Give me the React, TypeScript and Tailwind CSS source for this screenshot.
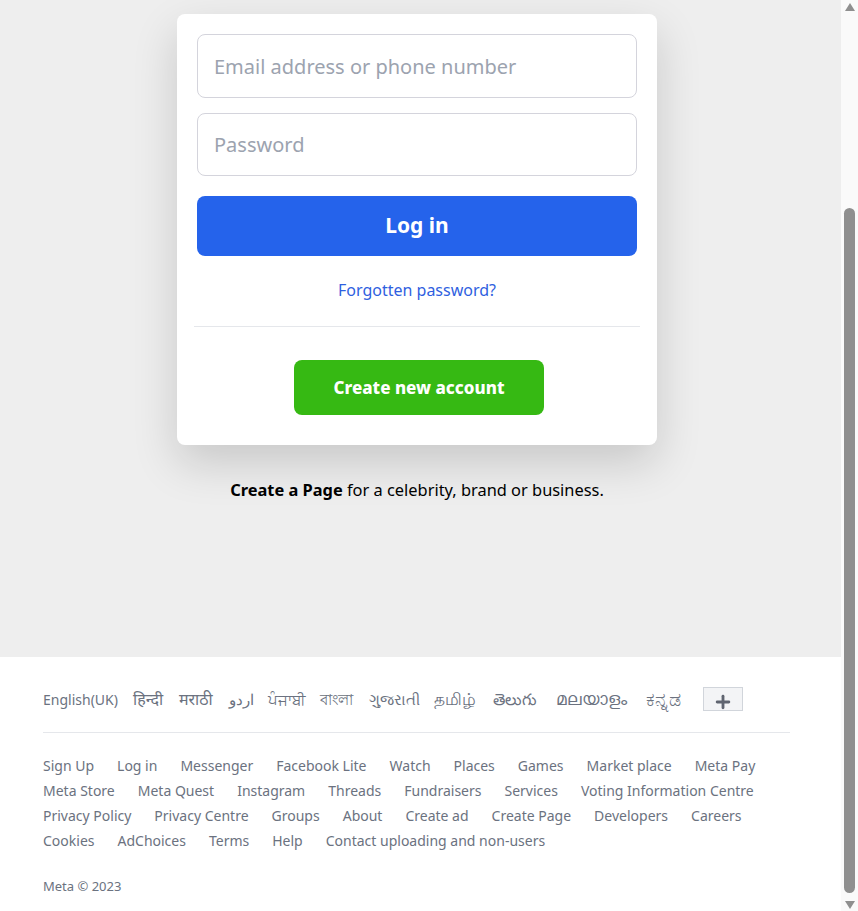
import { Plus } from 'lucide-react'

const languages = [
  { label: 'English(UK)', w: 'w-[75px]' },
  { label: 'हिन्दी', w: 'w-[31px] text-[16px]' },
  { label: 'मराठी', w: 'w-[35px] text-[16px]' },
  { label: 'اردو', w: 'w-[24px] text-[15px]' },
  { label: 'ਪੰਜਾਬੀ', w: 'w-[37px] text-[15px]' },
  { label: 'বাংলা', w: 'w-[34px] text-[15px]' },
  { label: 'ગુજરાતી', w: 'w-[50px] text-[15px]' },
  { label: 'தமிழ்', w: 'w-[44px] text-[17px]' },
  { label: 'తెలుగు', w: 'w-[48px] text-[16px]' },
  { label: 'മലയാളം', w: 'w-[75px] text-[17px]' },
  { label: 'ಕನ್ನಡ', w: 'w-[42px] text-[19px]' },
]

const links = [
  'Sign Up', 'Log in', 'Messenger', 'Facebook Lite', 'Watch', 'Places', 'Games', 'Market place', 'Meta Pay',
  'Meta Store', 'Meta Quest', 'Instagram', 'Threads', 'Fundraisers', 'Services', 'Voting Information Centre',
  'Privacy Policy', 'Privacy Centre', 'Groups', 'About', 'Create ad', 'Create Page', 'Developers', 'Careers',
  'Cookies', 'AdChoices', 'Terms', 'Help', 'Contact uploading and non-users',
]

function LoginCard() {
  return (
    <div className="w-[480px] bg-white rounded-lg shadow-[0_18px_45px_rgba(0,0,0,0.16)] px-5 pt-5 pb-[30px] flex flex-col items-center">
      <input
        type="text"
        placeholder="Email address or phone number"
        className="w-full h-[64px] rounded-lg border border-[#d4d4dc] px-4 text-[20px] text-gray-800 placeholder:text-[#9ca3af] outline-none"
      />
      <input
        type="password"
        placeholder="Password"
        className="mt-[15px] w-full h-[63px] rounded-lg border border-[#d4d4dc] px-4 text-[20px] text-gray-800 placeholder:text-[#9ca3af] outline-none"
      />
      <button className="mt-5 w-full h-[60px] rounded-lg bg-[#2563eb] text-white text-[21px] font-bold">
        Log in
      </button>
      <a href="#" className="mt-[22px] text-[16px] text-[#2f5fe0]">
        Forgotten password?
      </a>
      <div className="mt-[24px] w-[446px] border-t border-[#e5e7eb]" />
      <button className="mt-[33px] ml-[4px] w-[250px] h-[55px] rounded-lg bg-[#36b913] text-white text-[17px] font-extrabold">
        Create new account
      </button>
    </div>
  )
}

function Scrollbar() {
  return (
    <div className="w-[17px] shrink-0 bg-[#fafafa] flex flex-col items-center">
      <svg width="10" height="8" viewBox="0 0 10 8" className="mt-[3px]">
        <polygon points="5,0 10,8 0,8" fill="#8f8f8f" />
      </svg>
      <div className="mt-[197px] w-[11px] flex-1 rounded-full bg-[#8f8f8f]" />
      <svg width="10" height="8" viewBox="0 0 10 8" className="mt-[8px] mb-[2px]">
        <polygon points="0,0 10,0 5,8" fill="#8f8f8f" />
      </svg>
    </div>
  )
}

export default function App() {
  return (
    <div className="flex h-[911px] w-full overflow-hidden" style={{ fontFamily: '"Noto Sans", "Open Sans", sans-serif' }}>
      <div className="flex-1 flex flex-col">
        <div className="h-[657px] shrink-0 bg-[#eeeeee] flex flex-col items-center pt-[14px] pr-[7px]">
          <LoginCard />
          <p className="mt-[33px] text-[16.4px] text-black">
            <span className="font-bold">Create a Page</span> for a celebrity, brand or business.
          </p>
        </div>
        <footer className="flex-1 bg-white px-[43px] pt-[30px] text-[#6b7280]">
          <div className="w-[747px]">
            <div className="flex items-center gap-x-[15px] text-[14px] h-[24px]">
              {languages.map((l) => (
                <a key={l.label} href="#" className={`whitespace-nowrap shrink-0 ${l.w}`}>
                  {l.label}
                </a>
              ))}
              <button className="w-[40px] h-[24px] overflow-visible bg-[#f3f4f6] border border-[#d1d5db] flex items-start justify-center text-[#5f6470]">
                <Plus className="mt-[4px] w-[20px] h-[20px] shrink-0" strokeWidth={3.4} />
              </button>
            </div>
            <div className="mt-[21px] border-t border-[#e5e7eb]" />
            <div className="mt-[20px] flex flex-wrap gap-x-[23px] text-[14px] leading-[25px]">
              {links.map((l) => (
                <a key={l} href="#" className="whitespace-nowrap">
                  {l}
                </a>
              ))}
            </div>
            <p className="mt-[24px] text-[13px]">Meta © 2023</p>
          </div>
        </footer>
      </div>
      <Scrollbar />
    </div>
  )
}
